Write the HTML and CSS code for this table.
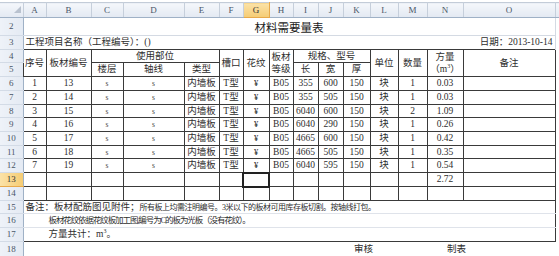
FILE: index.html
```html
<!DOCTYPE html>
<html lang="zh">
<head>
<meta charset="utf-8">
<title>材料需要量表</title>
<link rel="stylesheet" href="styles.css">
</head>
<body>
<table class="sheet">
  <colgroup>
    <col class="w-rh"><col class="w-a"><col class="w-b"><col class="w-c"><col class="w-d"><col class="w-e"><col class="w-f"><col class="w-g"><col class="w-h"><col class="w-i"><col class="w-j"><col class="w-k"><col class="w-l"><col class="w-m"><col class="w-n"><col class="w-o"><col class="w-p">
  </colgroup>
  <tr class="r-hdr">
    <th class="corner"><svg class="tri" width="7" height="7" viewBox="0 0 7 7"><polygon points="7,0 7,7 0,7" fill="#b9c2cf"/></svg></th>
    <th class="ch">A</th><th class="ch">B</th><th class="ch">C</th><th class="ch">D</th><th class="ch">E</th><th class="ch">F</th><th class="ch sel">G</th><th class="ch">H</th><th class="ch">I</th><th class="ch">J</th><th class="ch">K</th><th class="ch">L</th><th class="ch">M</th><th class="ch">N</th><th class="ch">O</th><th class="ch"></th>
  </tr>
  <tr class="r2">
    <th class="rh">2</th>
    <td colspan="15" class="title">材料需要量表</td>
    <td></td>
  </tr>
  <tr class="r3">
    <th class="rh">3</th>
    <td colspan="12" class="proj">工程项目名称（工程编号）：()</td>
    <td colspan="3" class="date">日期：2013-10-14</td>
    <td></td>
  </tr>
  <tr class="t r4">
    <th class="rh">4</th>
    <td rowspan="2">序号</td>
    <td rowspan="2">板材编号</td>
    <td colspan="3">使用部位</td>
    <td rowspan="2">槽口</td>
    <td rowspan="2">花纹</td>
    <td rowspan="2" class="two">板材<br>等级</td>
    <td colspan="3">规格、型号</td>
    <td rowspan="2">单位</td>
    <td rowspan="2">数量</td>
    <td rowspan="2" class="two">方量<br>（m<sup>3</sup>）</td>
    <td rowspan="2">备注</td>
    <td class="pad" rowspan="2"></td>
  </tr>
  <tr class="t r5">
    <th class="rh">5</th>
    <td>楼层</td><td>轴线</td><td>类型</td>
    <td>长</td><td>宽</td><td>厚</td>
  </tr>
  <tr class="t r14">
    <th class="rh">6</th>
    <td>1</td><td>13</td><td class="s">s</td><td class="s">s</td><td>内墙板</td><td>T型</td><td class="y">¥</td><td>B05</td><td>355</td><td>600</td><td>150</td><td>块</td><td>1</td><td>0.03</td><td></td><td class="pad"></td>
  </tr>
  <tr class="t r14">
    <th class="rh">7</th>
    <td>2</td><td>14</td><td class="s">s</td><td class="s">s</td><td>内墙板</td><td>T型</td><td class="y">¥</td><td>B05</td><td>355</td><td>505</td><td>150</td><td>块</td><td>1</td><td>0.03</td><td></td><td class="pad"></td>
  </tr>
  <tr class="t r13">
    <th class="rh">8</th>
    <td>3</td><td>15</td><td class="s">s</td><td class="s">s</td><td>内墙板</td><td>T型</td><td class="y">¥</td><td>B05</td><td>6040</td><td>600</td><td>150</td><td>块</td><td>2</td><td>1.09</td><td></td><td class="pad"></td>
  </tr>
  <tr class="t r14">
    <th class="rh">9</th>
    <td>4</td><td>16</td><td class="s">s</td><td class="s">s</td><td>内墙板</td><td>T型</td><td class="y">¥</td><td>B05</td><td>6040</td><td>290</td><td>150</td><td>块</td><td>1</td><td>0.26</td><td></td><td class="pad"></td>
  </tr>
  <tr class="t r14">
    <th class="rh">10</th>
    <td>5</td><td>17</td><td class="s">s</td><td class="s">s</td><td>内墙板</td><td>T型</td><td class="y">¥</td><td>B05</td><td>4665</td><td>600</td><td>150</td><td>块</td><td>1</td><td>0.42</td><td></td><td class="pad"></td>
  </tr>
  <tr class="t r13">
    <th class="rh">11</th>
    <td>6</td><td>18</td><td class="s">s</td><td class="s">s</td><td>内墙板</td><td>T型</td><td class="y">¥</td><td>B05</td><td>4665</td><td>505</td><td>150</td><td>块</td><td>1</td><td>0.35</td><td></td><td class="pad"></td>
  </tr>
  <tr class="t r14">
    <th class="rh">12</th>
    <td>7</td><td>19</td><td class="s">s</td><td class="s">s</td><td>内墙板</td><td>T型</td><td class="y">¥</td><td>B05</td><td>6040</td><td>595</td><td>150</td><td>块</td><td>1</td><td>0.54</td><td></td><td class="pad"></td>
  </tr>
  <tr class="t r14">
    <th class="rh rsel">13</th>
    <td></td><td></td><td></td><td></td><td></td><td></td><td class="cur"></td><td></td><td></td><td></td><td></td><td></td><td></td><td>2.72</td><td></td><td class="pad"></td>
  </tr>
  <tr class="t r14">
    <th class="rh">14</th>
    <td></td><td></td><td></td><td></td><td></td><td></td><td></td><td></td><td></td><td></td><td></td><td></td><td></td><td></td><td></td><td class="pad"></td>
  </tr>
  <tr class="r13">
    <th class="rh">15</th>
    <td colspan="15" class="note n1">备注：板材配筋图见附件；<span class="sq">所有板上均需注明编号。3米以下的板材可用库存板切割。按轴线打包。</span></td>
    <td></td>
  </tr>
  <tr class="r14">
    <th class="rh">16</th>
    <td colspan="15" class="note n2"><span class="sq2">板材花纹依据花纹板加工图,编号为C的板为光板（没有花纹）。</span></td>
    <td></td>
  </tr>
  <tr class="r14">
    <th class="rh">17</th>
    <td colspan="15" class="note n3">方量共计：m<sup>3</sup>。</td>
    <td></td>
  </tr>
  <tr class="r15">
    <th class="rh">18</th>
    <td colspan="10"></td>
    <td class="sign1">审核</td>
    <td colspan="2"></td>
    <td class="sign2">制表</td>
    <td></td>
    <td></td>
  </tr>
</table>
</body>
</html>
```
FILE: styles.css
```css
body {
  margin: 0;
  padding-top: 2px;
  background: #ffffff;
  font-family: "Liberation Serif", "Noto Sans CJK SC", serif;
  font-size: 9.5px;
  color: #2e2e2e;
}

.sheet {
  border-collapse: collapse;
  table-layout: fixed;
  width: 559px;
}

.sheet td,
.sheet th {
  padding: 0;
  white-space: nowrap;
  overflow: visible;
  text-align: center;
  vertical-align: middle;
  font-weight: normal;
  line-height: 11px;
}

.w-rh { width: 23px; }
.w-a { width: 23px; }
.w-b { width: 45px; }
.w-c { width: 32px; }
.w-d { width: 61px; }
.w-e { width: 35px; }
.w-f { width: 24px; }
.w-g { width: 26px; }
.w-h { width: 24px; }
.w-i { width: 25px; }
.w-j { width: 25px; }
.w-k { width: 27px; }
.w-l { width: 28px; }
.w-m { width: 29px; }
.w-n { width: 36px; }
.w-o { width: 92px; }
.w-p { width: 4px; }

/* headers */
.r-hdr { height: 15px; }
.r-hdr th {
  background: linear-gradient(#f4f7fb, #e3e9f2);
  border-top: 1px solid #c3ccd8;
  border-right: 1px solid #c6cfdb;
  border-bottom: 1px solid #9fb1c6;
  color: #4a5668;
  font-size: 9px;
}
.corner { text-align: right; vertical-align: bottom; }
.tri { display: block; margin: 0 2px 2px auto; }
.r-hdr th.sel {
  background: linear-gradient(#fbe2a7, #f5cc74);
  border-right-color: #e8a94a;
  border-bottom-color: #e8a94a;
  color: #333;
}

.rh {
  background: linear-gradient(90deg, #eef2f8, #e4eaf3);
  border-right: 1px solid #9fb1c6;
  border-bottom: 1px solid #d3dbe6;
  color: #4a5668;
  font-size: 9px;
}
.sheet th.rsel {
  background: linear-gradient(90deg, #fbe2a7, #f5cc74);
  border-bottom-color: #e8a94a;
  color: #333;
}

/* row heights */
.r2 { height: 18px; }
.r3 { height: 14px; }
.r4 { height: 13px; }
.r5 { height: 14px; }
.r13 { height: 13px; }
.r14 { height: 14px; }
.r15 { height: 15px; }

.title {
  font-family: "Noto Sans CJK SC", sans-serif;
  font-weight: 700;
  font-size: 11.5px;
  color: #1a1a1a;
  padding-top: 1px !important;
  border-bottom: 1px solid #d4dae3;
  border-right: 1px solid #d4dae3;
}
.proj {
  text-align: left !important;
  padding-left: 2px !important;
}
.date {
  text-align: right !important;
  padding-right: 2px !important;
  border-right: 1px solid #d4dae3;
}

/* bordered table */
.t td { border: 1px solid #3a3a3a; }
.t td.pad { border-top: none; border-bottom: none; border-right: none; }
.two { line-height: 12.5px !important; }
sup { font-size: 6px; line-height: 0; vertical-align: 4px; }
.s { font-size: 7.5px; color: #444; }
.y { font-size: 8.5px; }
.cur { outline: 2px solid #222222; outline-offset: -1px; }

/* notes */
.note {
  text-align: left !important;
  border-right: 1px solid #3a3a3a;
}
.n1 { padding-left: 2px !important; border-bottom: 1px solid #dfe3ea; }
.n2 { padding-left: 25px !important; border-bottom: 1px solid #dfe3ea; }
.n3 { padding-left: 25px !important; border-bottom: 1px solid #3a3a3a; }
.sq { font-size: 8px; letter-spacing: -0.5px; }
.sq2 { font-size: 8.5px; letter-spacing: -1.1px; }

.sign1 { text-align: left !important; padding-left: 11px !important; }
.sign2 { text-align: left !important; padding-left: 20px !important; }
```
